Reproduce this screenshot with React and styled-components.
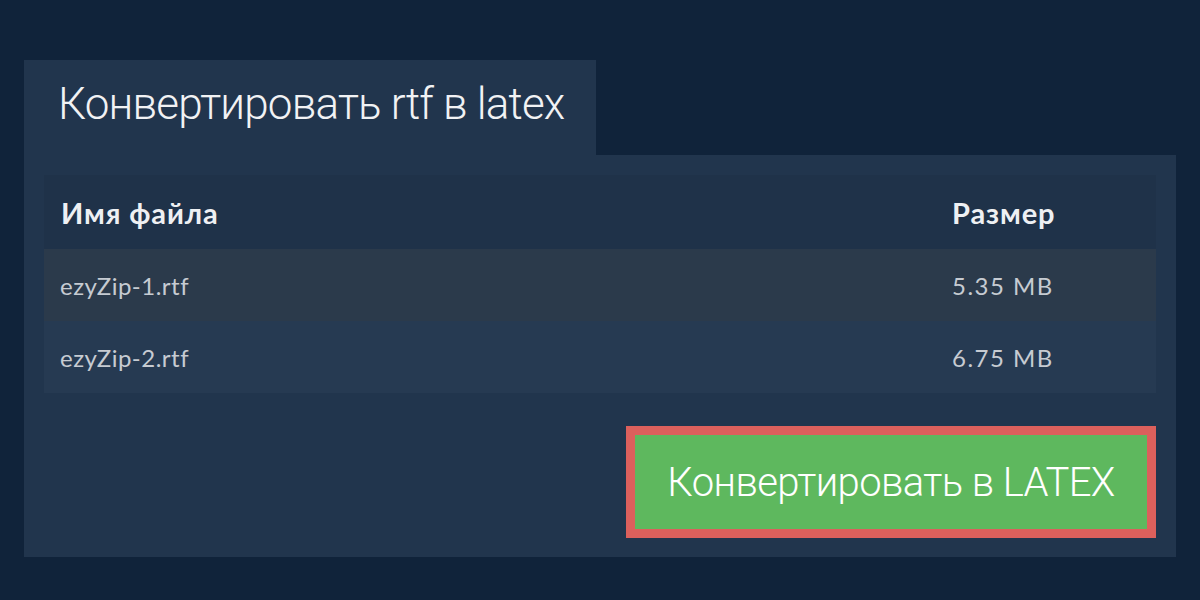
import React from "react";
import styled, { createGlobalStyle } from "styled-components";

const files = [
    { name: "ezyZip-1.rtf", size: "5.35 MB" },
    { name: "ezyZip-2.rtf", size: "6.75 MB" },
];

const GlobalStyle = createGlobalStyle`
    html, body {
        margin: 0;
        padding: 0;
        background: #10233a;
    }
    * {
        box-sizing: border-box;
    }
`;

const App = () => {
    return (
        <>
            <GlobalStyle />
            <Page>
                <Tab>
                    <Title>Конвертировать rtf в latex</Title>
                </Tab>
                <Panel>
                    <Table>
                        <HeadRow>
                            <HeadCell>Имя файла</HeadCell>
                            <HeadCell>Размер</HeadCell>
                        </HeadRow>
                        {files.map((file, i) => (
                            <Row key={file.name} $odd={i % 2 === 0}>
                                <Cell>{file.name}</Cell>
                                <Cell $wide>{file.size}</Cell>
                            </Row>
                        ))}
                    </Table>
                    <Actions>
                        <ConvertBtn>Конвертировать в LATEX</ConvertBtn>
                    </Actions>
                </Panel>
            </Page>
        </>
    );
};

export default App;

const Page = styled.div`
    width: 1200px;
    height: 600px;
    padding: 60px 24px 0;
    display: flex;
    flex-direction: column;
    align-items: flex-start;
`;

const Tab = styled.div`
    width: 572px;
    height: 95px;
    padding: 18px 0 0 34px;
    background: #21354d;
`;

const Title = styled.h1`
    margin: 0;
    font-family: Roboto, "Liberation Sans", sans-serif;
    font-weight: 300;
    font-size: 44px;
    letter-spacing: -0.8px;
    line-height: 52px;
    color: #f1f2f4;
`;

const Panel = styled.div`
    width: 1152px;
    height: 402px;
    padding: 20px 20px 0;
    background: #21354d;
    display: flex;
    flex-direction: column;
`;

const Table = styled.div`
    display: flex;
    flex-direction: column;
`;

const HeadRow = styled.div`
    height: 74px;
    display: grid;
    grid-template-columns: 1fr 204px;
    align-items: center;
    padding-left: 17px;
    background: #1f3249;
`;

const HeadCell = styled.div`
    font-family: Lato, "Liberation Sans", sans-serif;
    font-weight: 700;
    font-size: 29px;
    letter-spacing: 0.9px;
    color: #eef0f3;
`;

const Row = styled.div`
    height: 72px;
    display: grid;
    grid-template-columns: 1fr 204px;
    align-items: center;
    padding-left: 16px;
    background: ${(p) => (p.$odd ? "#2b3a4b" : "#263a52")};
`;

const Cell = styled.div`
    font-family: Lato, "Liberation Sans", sans-serif;
    font-weight: 400;
    font-size: 24px;
    letter-spacing: ${(p) => (p.$wide ? "1.5px" : "0.5px")};
    color: #c6cbd2;
`;

const Actions = styled.div`
    display: flex;
    justify-content: flex-end;
    padding-top: 33px;
`;

const ConvertBtn = styled.button`
    width: 530px;
    height: 112px;
    border: 9px solid #dc605c;
    background: #5eb85e;
    color: #ffffff;
    font-family: Roboto, "Liberation Sans", sans-serif;
    font-weight: 300;
    font-size: 40px;
    letter-spacing: -0.6px;
    cursor: pointer;
    padding: 0;
`;
